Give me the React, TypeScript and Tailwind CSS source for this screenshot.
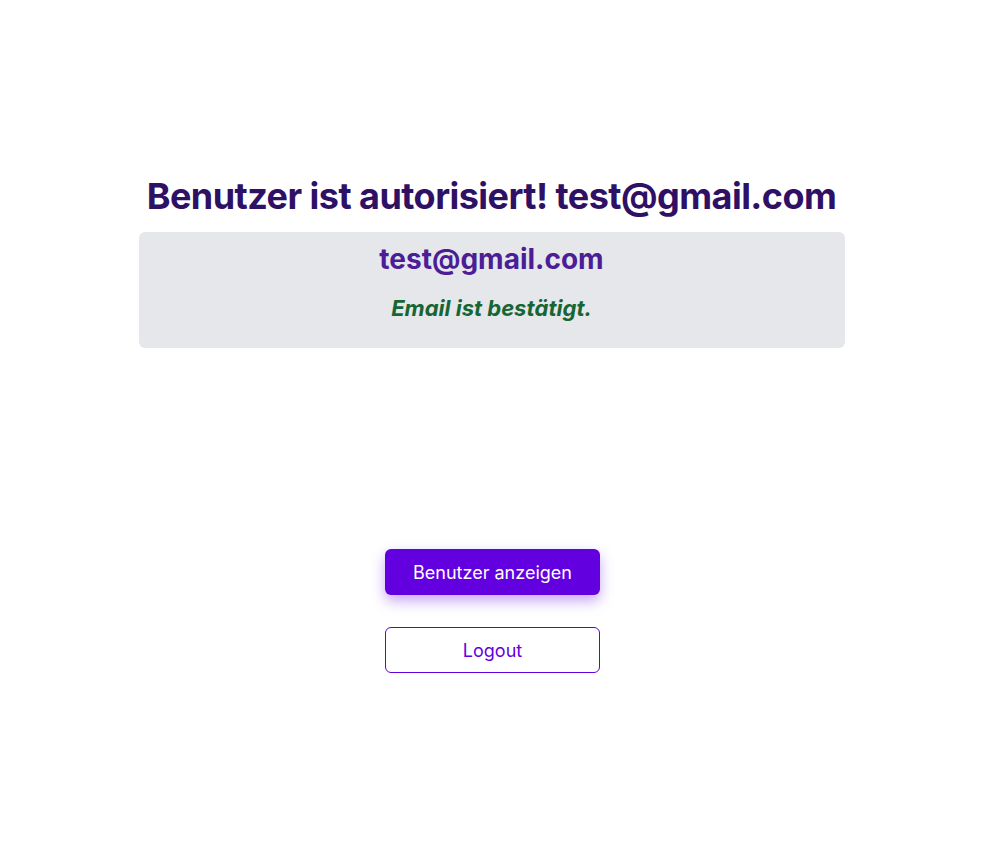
export default function App() {
  return (
    <div className="min-h-[851px] w-[983px] bg-white font-['Inter',sans-serif] flex flex-col items-center">
      <h1 className="mt-[172px] text-[36px] leading-[48px] font-bold text-[#2e1065] tracking-[-0.015em]">
        Benutzer ist autorisiert! test@gmail.com
      </h1>
      <div className="mt-[12px] w-[706px] h-[116px] rounded-md bg-[#e5e7eb] flex flex-col items-center pt-[8px]">
        <div className="text-[28px] leading-[38px] font-bold text-[#4c1d95]">test@gmail.com</div>
        <div className="mt-[15px] text-[22px] leading-[30px] font-bold italic text-[#166534]">
          Email ist bestätigt.
        </div>
      </div>
      <div className="mt-[201px] pl-[2px] flex flex-col items-center gap-[32px]">
        <button className="w-[215px] h-[46px] rounded-md bg-[#6200e0] text-white text-[18px] shadow-[0_6px_14px_rgba(98,0,224,0.35)]">
          Benutzer anzeigen
        </button>
        <button className="w-[215px] h-[46px] rounded-md border border-[#6200e0] bg-white text-[#6200e0] text-[18px]">
          Logout
        </button>
      </div>
    </div>
  )
}
